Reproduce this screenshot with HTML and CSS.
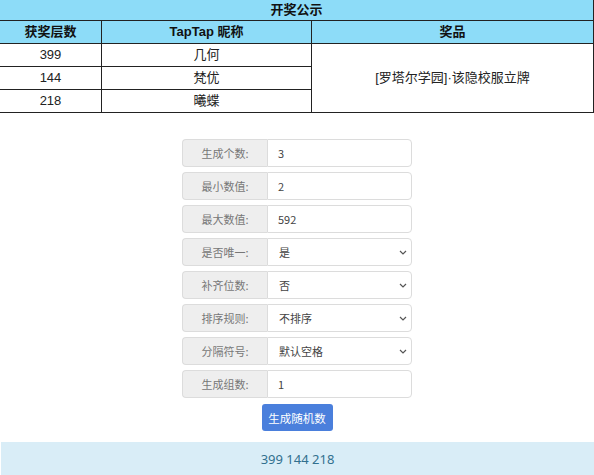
FILE: index.html
```html
<!DOCTYPE html>
<html lang="zh">
<head>
<meta charset="utf-8">
<title>开奖公示</title>
<link rel="stylesheet" href="styles.css">
</head>
<body>
<table class="prize">
  <colgroup><col class="c1"><col class="c2"><col class="c3"></colgroup>
  <tr class="title"><th colspan="3">开奖公示</th></tr>
  <tr class="head"><th>获奖层数</th><th>TapTap 昵称</th><th>奖品</th></tr>
  <tr><td>399</td><td>几何</td><td rowspan="3">[罗塔尔学园]·该隐校服立牌</td></tr>
  <tr><td>144</td><td>梵优</td></tr>
  <tr><td>218</td><td>曦蝶</td></tr>
</table>

<div class="form">
  <div class="group"><span class="label">生成个数:</span><span class="field">3</span></div>
  <div class="group"><span class="label">最小数值:</span><span class="field">2</span></div>
  <div class="group"><span class="label">最大数值:</span><span class="field">592</span></div>
  <div class="group"><span class="label">是否唯一:</span><span class="field select">是<svg class="chev" width="8" height="5" viewBox="0 0 8 5"><path d="M1 1l3 3 3-3" fill="none" stroke="#555" stroke-width="1.2"/></svg></span></div>
  <div class="group"><span class="label">补齐位数:</span><span class="field select">否<svg class="chev" width="8" height="5" viewBox="0 0 8 5"><path d="M1 1l3 3 3-3" fill="none" stroke="#555" stroke-width="1.2"/></svg></span></div>
  <div class="group"><span class="label">排序规则:</span><span class="field select">不排序<svg class="chev" width="8" height="5" viewBox="0 0 8 5"><path d="M1 1l3 3 3-3" fill="none" stroke="#555" stroke-width="1.2"/></svg></span></div>
  <div class="group"><span class="label">分隔符号:</span><span class="field select">默认空格<svg class="chev" width="8" height="5" viewBox="0 0 8 5"><path d="M1 1l3 3 3-3" fill="none" stroke="#555" stroke-width="1.2"/></svg></span></div>
  <div class="group"><span class="label">生成组数:</span><span class="field">1</span></div>
  <button class="btn">生成随机数</button>
</div>

<div class="result">399 144 218</div>
</body>
</html>
```

FILE: styles.css
```css
html, body {
  margin: 0;
  padding: 0;
  background: #fff;
}
body {
  width: 594px;
  overflow: hidden;
}
.prize {
  border-collapse: collapse;
  width: 594px;
  margin-left: -1px;
  table-layout: fixed;
  font-family: "Liberation Sans", "Noto Sans CJK SC", sans-serif;
  font-size: 13px;
  color: #222;
}
.c1 { width: 102px; }
.c2 { width: 210px; }
.c3 { width: 282px; }
.prize th, .prize td {
  border: 1px solid #222;
  text-align: center;
  padding: 0;
  height: 22px;
  line-height: 20px;
}
.prize th {
  background: #8ddcf8;
  font-weight: bold;
  color: #111;
}
.prize tr.title th {
  height: 20px;
  border-top: none;
  border-left: 1px solid #8ddcf8;
}
.prize tr.head th {
  height: 22px;
}
.prize td {
  height: 22px;
}
.form {
  width: 230px;
  margin: 26px auto 0;
  display: flex;
  flex-direction: column;
  align-items: center;
  gap: 5px;
  font-family: "Noto Sans CJK SC", "Noto Sans", sans-serif;
  font-size: 11px;
  color: #555;
}
.group {
  width: 230px;
  height: 28px;
  display: flex;
  box-sizing: border-box;
}
.label {
  width: 85px;
  box-sizing: border-box;
  background: #eeeeee;
  border: 1px solid #dcdcdc;
  border-right: none;
  border-radius: 4px 0 0 4px;
  display: flex;
  align-items: center;
  justify-content: center;
  color: #777;
}
.field {
  flex: 1;
  box-sizing: border-box;
  border: 1px solid #dcdcdc;
  border-radius: 0 4px 4px 0;
  background: #fff;
  display: flex;
  align-items: center;
  padding-left: 10px;
  color: #444;
}
.field.select {
  padding-left: 11px;
  padding-right: 4px;
  justify-content: space-between;
}
.chev {
  display: block;
}
.btn {
  margin-top: 1px;
  width: 71px;
  height: 27px;
  border: none;
  border-radius: 3px;
  background: #4a7fdc;
  color: #fff;
  font-family: "Noto Sans CJK SC", "Noto Sans", sans-serif;
  font-size: 11.5px;
  padding: 0;
}
.result {
  margin: 11px 0 0 1px;
  height: 40px;
  background: #d9edf7;
  color: #31708f;
  font-family: "Noto Sans", "Noto Sans CJK SC", sans-serif;
  font-size: 13px;
  text-align: center;
  line-height: 34px;
}
```
